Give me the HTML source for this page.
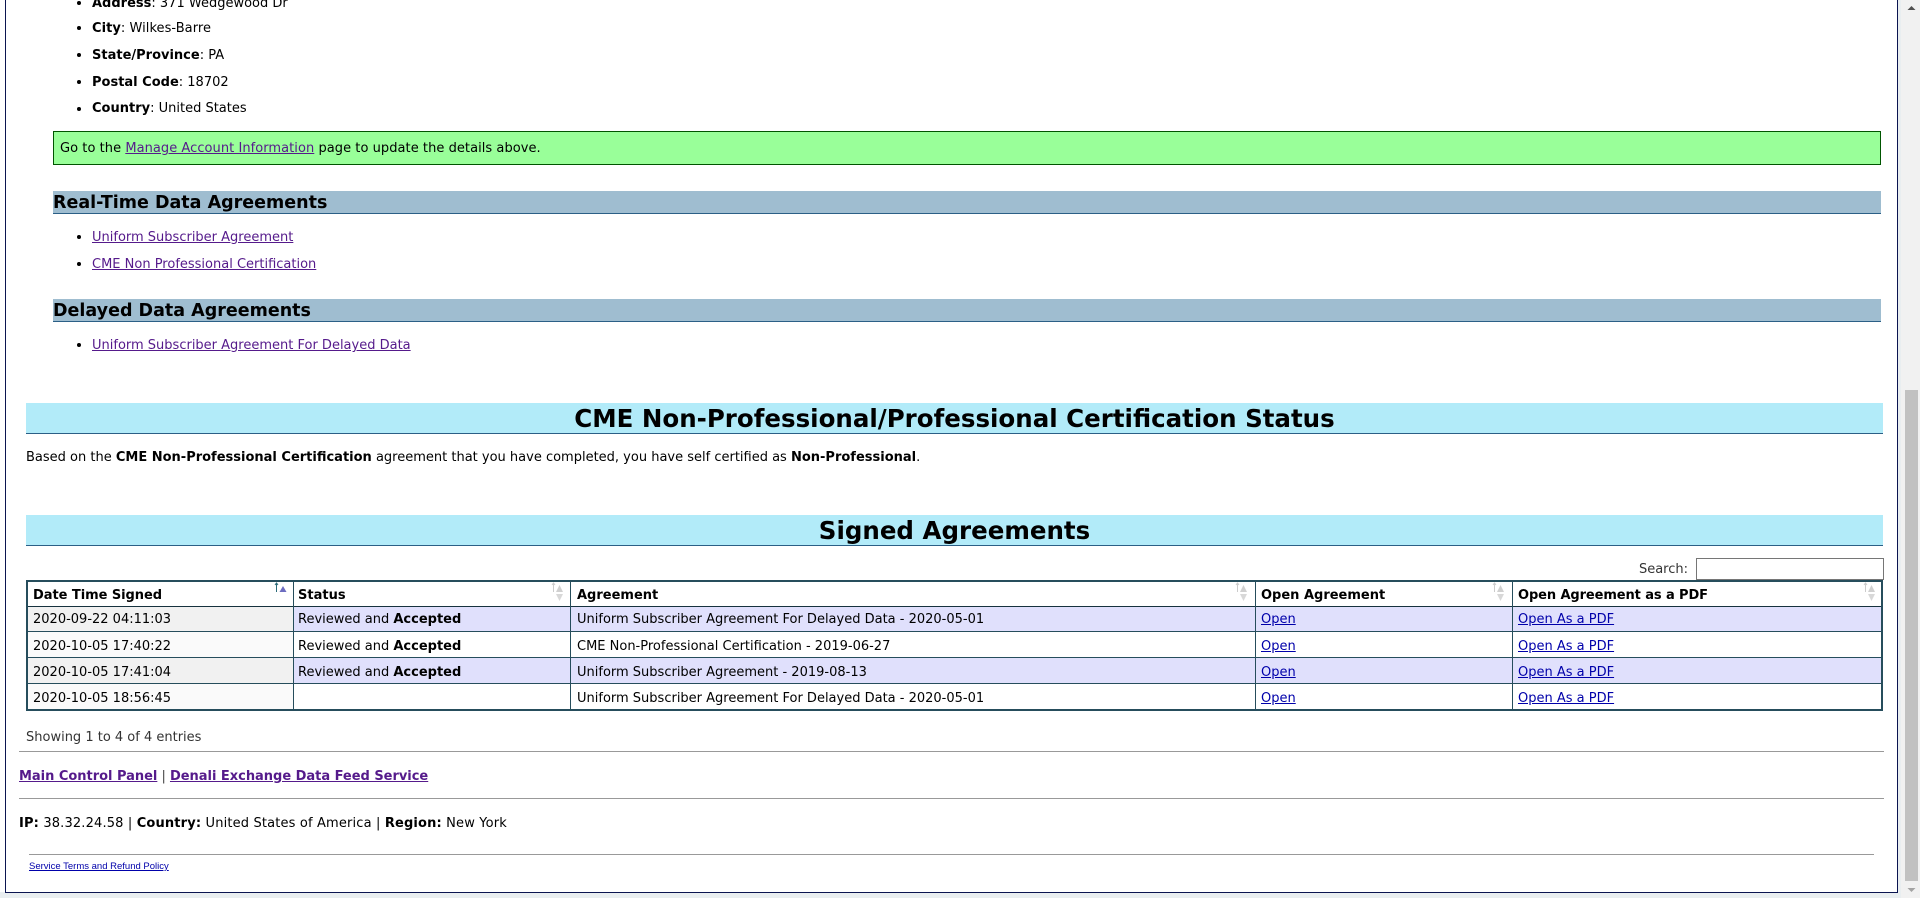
<!DOCTYPE html>
<html><head><meta charset="utf-8"><title>Agreements</title>
<style>
html,body{margin:0;padding:0;width:1920px;height:898px;overflow:hidden;background:#e9eef0}
body{font-family:"DejaVu Sans",sans-serif;font-size:13px;color:#000}
.b{position:absolute;background:#0b1550}
.t{position:absolute;white-space:nowrap;line-height:20px;height:20px}
.li{position:absolute;left:77px;width:4px;height:4px;border-radius:50%;background:#000}
a{color:#551a8b}
a.u{color:#0000aa}
.h2{position:absolute;left:53px;width:1828px;height:22px;background:#9fbdd0;border-bottom:1px solid #2b5f86;box-sizing:content-box;font-weight:bold;font-size:17.5px;line-height:25px;white-space:nowrap}
.h1{position:absolute;left:26px;width:1857px;height:30px;background:#b2ebf9;border-bottom:1px solid #2b5f86;font-weight:bold;font-size:24.5px;line-height:32px;text-align:center;white-space:nowrap}
.hr{position:absolute;height:1px;background:#999}
.line{position:absolute;background:#264d5c}
.r{position:absolute}
svg{position:absolute}
</style></head><body>
<div style="position:absolute;left:0;top:0;width:1897px;height:892px;background:#fff"></div>
<div class="b" style="left:5px;top:0;width:1px;height:893px"></div>
<div class="b" style="left:1897px;top:0;width:1px;height:893px"></div>
<div class="b" style="left:5px;top:892px;width:1893px;height:1px"></div>

<div class="li" style="top:1px"></div><div class="t" style="left:92px;top:-6px"><b>Address</b>: 371 Wedgewood Dr</div>
<div class="li" style="top:26px"></div><div class="t" style="left:92px;top:19px;letter-spacing:.05px"><b>City</b>: Wilkes-Barre</div>
<div class="li" style="top:53px"></div><div class="t" style="left:92px;top:46px"><b>State/Province</b>: PA</div>
<div class="li" style="top:80px"></div><div class="t" style="left:92px;top:73px"><b>Postal Code</b>: 18702</div>
<div class="li" style="top:107px"></div><div class="t" style="left:92px;top:99px"><b>Country</b>: United States</div>

<div style="position:absolute;left:53px;top:131px;width:1826px;height:32px;background:#99ff99;border:1px solid #005500"></div>
<div class="t" style="left:60px;top:139px;letter-spacing:.05px">Go to the <a href="#">Manage Account Information</a> page to update the details above.</div>

<div class="h2" style="top:191px">Real-Time Data Agreements</div>
<div class="li" style="top:235px"></div><div class="t" style="left:92px;top:228px"><a href="#">Uniform Subscriber Agreement</a></div>
<div class="li" style="top:262px"></div><div class="t" style="left:92px;top:255px"><a href="#">CME Non Professional Certification</a></div>

<div class="h2" style="top:299px">Delayed Data Agreements</div>
<div class="li" style="top:343px"></div><div class="t" style="left:92px;top:336px"><a href="#">Uniform Subscriber Agreement For Delayed Data</a></div>

<div class="h1" style="top:403px">CME Non-Professional/Professional Certification Status</div>
<div class="t" style="left:26px;top:448px">Based on the <b>CME Non-Professional Certification</b> agreement that you have completed, you have self certified as <b>Non-Professional</b>.</div>
<div class="h1" style="top:515px">Signed Agreements</div>

<div class="t" style="left:1638px;top:560px;width:50px;text-align:right;color:#333">Search:</div>
<div style="position:absolute;left:1696px;top:558px;width:186px;height:20px;border:1px solid #767676;background:#fff"></div>

<!-- table backgrounds -->
<div class="r" style="left:27px;top:607px;width:266px;height:25px;background:#f1f1f1"></div>
<div class="r" style="left:27px;top:632px;width:266px;height:25px;background:#fafafa"></div>
<div class="r" style="left:27px;top:657px;width:266px;height:26px;background:#f1f1f1"></div>
<div class="r" style="left:27px;top:683px;width:266px;height:26px;background:#fafafa"></div>
<div class="r" style="left:293px;top:607px;width:1589px;height:25px;background:#e0e0fc"></div>
<div class="r" style="left:293px;top:657px;width:1589px;height:26px;background:#e0e0fc"></div>
<!-- table lines -->
<div class="line" style="left:26px;top:580px;width:1857px;height:2px"></div>
<div class="line" style="left:26px;top:606px;width:1857px;height:1px;background:#16323e"></div>
<div class="line" style="left:26px;top:631px;width:1857px;height:1px"></div>
<div class="line" style="left:26px;top:657px;width:1857px;height:1px"></div>
<div class="line" style="left:26px;top:683px;width:1857px;height:1px"></div>
<div class="line" style="left:26px;top:709px;width:1857px;height:2px"></div>
<div class="line" style="left:26px;top:580px;width:2px;height:131px"></div>
<div class="line" style="left:1881px;top:580px;width:2px;height:131px"></div>
<div class="line" style="left:293px;top:580px;width:1px;height:131px"></div>
<div class="line" style="left:570px;top:580px;width:1px;height:131px"></div>
<div class="line" style="left:1255px;top:580px;width:1px;height:131px"></div>
<div class="line" style="left:1512px;top:580px;width:1px;height:131px"></div>

<!-- header text -->
<div class="t" style="left:33px;top:586px;letter-spacing:-.05px"><b>Date Time Signed</b></div>
<div class="t" style="left:298px;top:586px"><b>Status</b></div>
<div class="t" style="left:577px;top:586px"><b>Agreement</b></div>
<div class="t" style="left:1261px;top:586px"><b>Open Agreement</b></div>
<div class="t" style="left:1518px;top:586px;letter-spacing:-.1px"><b>Open Agreement as a PDF</b></div>

<!-- sort icons -->
<svg style="left:274px;top:582px" width="14" height="14" viewBox="0 0 14 14"><path d="M2.500 1v9" stroke="#2b6a78" stroke-width="1"/><path d="M1 3L2.500 1L4 3" fill="none" stroke="#2b6a78" stroke-width="1"/><path d="M9 4l3.500 6h-7z" fill="#6c6cc0"/></svg>
<svg style="left:551px;top:582px" width="14" height="22" viewBox="0 0 14 22"><path d="M2.500 1v9" stroke="#ccc"/><path d="M1 3L2.500 1L4 3" fill="none" stroke="#ccc"/><path d="M8.500 3l3.500 7h-7z" fill="#d0d0d0"/><path d="M5 12h7l-3.500 7z" fill="#d8d8d8"/></svg>
<svg style="left:1235px;top:582px" width="14" height="22" viewBox="0 0 14 22"><path d="M2.500 1v9" stroke="#ccc"/><path d="M1 3L2.500 1L4 3" fill="none" stroke="#ccc"/><path d="M8.500 3l3.500 7h-7z" fill="#d0d0d0"/><path d="M5 12h7l-3.500 7z" fill="#d8d8d8"/></svg>
<svg style="left:1492px;top:582px" width="14" height="22" viewBox="0 0 14 22"><path d="M2.500 1v9" stroke="#ccc"/><path d="M1 3L2.500 1L4 3" fill="none" stroke="#ccc"/><path d="M8.500 3l3.500 7h-7z" fill="#d0d0d0"/><path d="M5 12h7l-3.500 7z" fill="#d8d8d8"/></svg>
<svg style="left:1863px;top:582px" width="14" height="22" viewBox="0 0 14 22"><path d="M2.500 1v9" stroke="#ccc"/><path d="M1 3L2.500 1L4 3" fill="none" stroke="#ccc"/><path d="M8.500 3l3.500 7h-7z" fill="#d0d0d0"/><path d="M5 12h7l-3.500 7z" fill="#d8d8d8"/></svg>

<!-- rows -->
<div class="t" style="left:33px;top:610px">2020-09-22 04:11:03</div>
<div class="t" style="left:298px;top:610px">Reviewed and <b>Accepted</b></div>
<div class="t" style="left:577px;top:610px">Uniform Subscriber Agreement For Delayed Data - 2020-05-01</div>
<div class="t" style="left:1261px;top:610px"><a class="u" href="#">Open</a></div>
<div class="t" style="left:1518px;top:610px"><a class="u" href="#">Open As a PDF</a></div>

<div class="t" style="left:33px;top:637px">2020-10-05 17:40:22</div>
<div class="t" style="left:298px;top:637px">Reviewed and <b>Accepted</b></div>
<div class="t" style="left:577px;top:637px">CME Non-Professional Certification - 2019-06-27</div>
<div class="t" style="left:1261px;top:637px"><a class="u" href="#">Open</a></div>
<div class="t" style="left:1518px;top:637px"><a class="u" href="#">Open As a PDF</a></div>

<div class="t" style="left:33px;top:663px">2020-10-05 17:41:04</div>
<div class="t" style="left:298px;top:663px">Reviewed and <b>Accepted</b></div>
<div class="t" style="left:577px;top:663px">Uniform Subscriber Agreement - 2019-08-13</div>
<div class="t" style="left:1261px;top:663px"><a class="u" href="#">Open</a></div>
<div class="t" style="left:1518px;top:663px"><a class="u" href="#">Open As a PDF</a></div>

<div class="t" style="left:33px;top:689px">2020-10-05 18:56:45</div>
<div class="t" style="left:577px;top:689px">Uniform Subscriber Agreement For Delayed Data - 2020-05-01</div>
<div class="t" style="left:1261px;top:689px"><a class="u" href="#">Open</a></div>
<div class="t" style="left:1518px;top:689px"><a class="u" href="#">Open As a PDF</a></div>

<div class="t" style="left:26px;top:728px;color:#333">Showing 1 to 4 of 4 entries</div>
<div class="hr" style="left:19px;top:751px;width:1865px"></div>
<div class="t" style="left:19px;top:767px;letter-spacing:-.02px"><b><a href="#">Main Control Panel</a></b>&nbsp;<span style="color:#444">|</span>&nbsp;<b><a href="#">Denali Exchange Data Feed Service</a></b></div>
<div class="hr" style="left:19px;top:798px;width:1865px"></div>
<div class="t" style="left:19px;top:814px;letter-spacing:.155px"><b>IP:</b> 38.32.24.58 | <b>Country:</b> United States of America | <b>Region:</b> New York</div>
<div class="hr" style="left:29px;top:854px;width:1845px"></div>
<div class="t" style="left:29px;top:857px;font-size:9.500px;font-family:'Liberation Sans',sans-serif"><a class="u" href="#">Service Terms and Refund Policy</a></div>

<!-- scrollbar -->
<div class="r" style="left:1901px;top:0;width:19px;height:898px;background:#f1f1f1"></div>
<div class="r" style="left:1905px;top:390px;width:13px;height:491px;background:#c1c1c1"></div>
<svg style="left:1905px;top:4px" width="13" height="8"><path d="M6.500 2l4 4h-8z" fill="#505050"/></svg>
<svg style="left:1905px;top:886px" width="13" height="8"><path d="M2.500 2h8l-4 4z" fill="#a3a3a3"/></svg>
</body></html>
